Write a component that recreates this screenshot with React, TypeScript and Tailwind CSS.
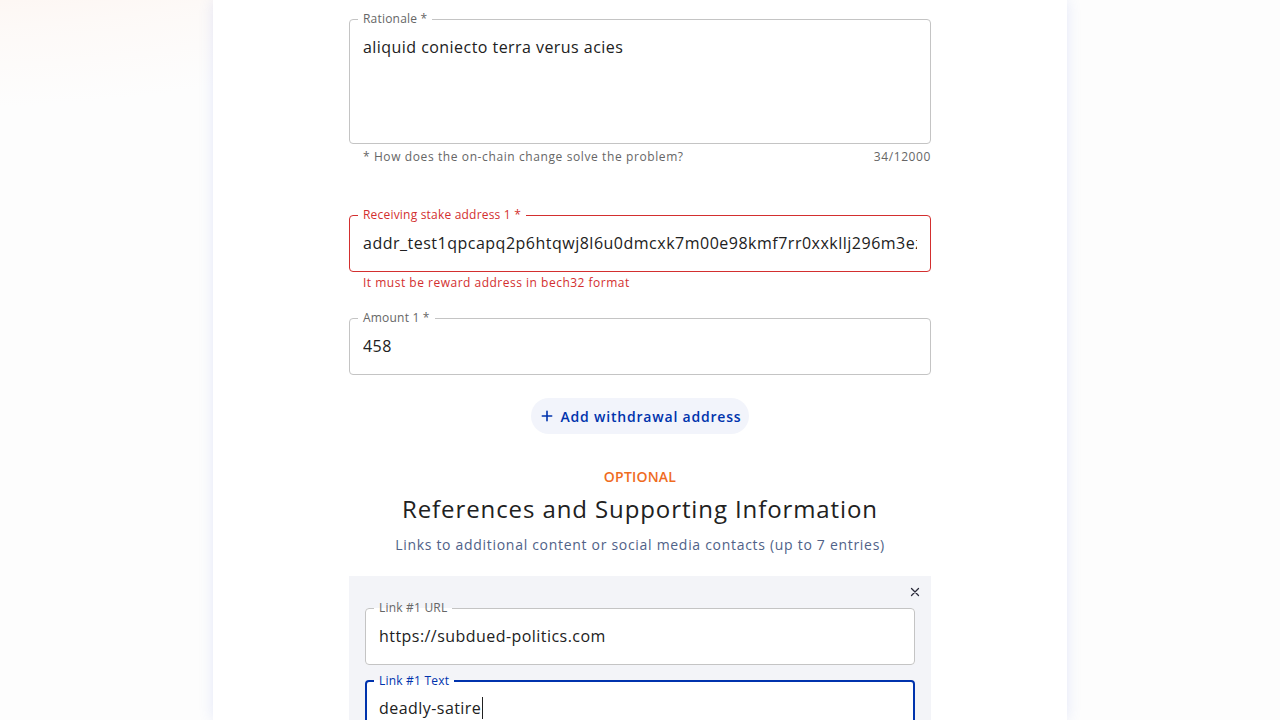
import React from "react";

const F = { fontFamily: '"Open Sans", "Liberation Sans", sans-serif' };

function Field({
  label,
  value,
  tone = "normal",
  multiline = false,
  caret = false,
  wide = false,
}: {
  label: string;
  value: string;
  tone?: "normal" | "error" | "focus";
  multiline?: boolean;
  caret?: boolean;
  wide?: boolean;
}) {
  const border =
    tone === "error"
      ? "border border-[#d32f2f]"
      : tone === "focus"
      ? "border-2 border-[#0033ad]"
      : "border border-[#c4c4c4]";
  const labelColor =
    tone === "error" ? "text-[#d32f2f]" : tone === "focus" ? "text-[#0033ad]" : "text-[#666666]";
  return (
    <fieldset className={`${border} rounded-[4px] bg-white min-w-0`}>
      <legend
        className={`${tone === "focus" ? "ml-[7px]" : "ml-[8px]"} px-[5px] text-[12px] leading-[12px] tracking-[0.2px] ${labelColor}`}
      >
        {label}
      </legend>
      <div
        className={`${tone === "focus" ? "px-[12px]" : "px-[13px]"} text-[16px] text-[#212121] ${
          wide ? "tracking-[0.5px]" : "tracking-[0.45px]"
        } ${
          multiline
            ? "h-[118px] pt-[11px] leading-[23px]"
            : tone === "focus"
            ? "h-[48px] pb-[6px] flex items-center"
            : "h-[50px] pb-[6px] flex items-center"
        }`}
      >
        <div className="flex-1 min-w-0 overflow-hidden whitespace-nowrap flex items-center">
          <span>{value}</span>
          {caret && <span className="inline-block w-px h-[22px] bg-[#212121] ml-[1px]" />}
        </div>
      </div>
    </fieldset>
  );
}

export default function App() {
  return (
    <div className="relative w-full h-[720px] overflow-hidden bg-[#fdfdfd]" style={F}>
      <div className="absolute inset-0 bg-[radial-gradient(ellipse_1000px_420px_at_-60px_-220px,rgba(255,195,165,0.4),rgba(255,235,225,0.2)_60%,rgba(255,255,255,0)_78%)]" />
      <div className="relative flex justify-center h-full">
        <div className="w-[854px] h-full bg-white shadow-[0_0_14px_rgba(70,100,220,0.14)] flex justify-center">
          <div className="w-[582px] pt-[13px] flex flex-col">
            <Field label="Rationale *" value="aliquid coniecto terra verus acies" multiline />
            <div className="flex justify-between mt-[4px] h-[20px] items-center text-[12px] text-[#666666] tracking-[0.6px]">
              <span className="ml-[14px]">* How does the on-chain change solve the problem?</span>
              <span>34/12000</span>
            </div>

            <div className="mt-[43px]">
              <Field
                label="Receiving stake address 1 *"
                value="addr_test1qpcapq2p6htqwj8l6u0dmcxk7m00e98kmf7rr0xxkllj296m3ezqgtmk6z9u6l5d2p3yvzk9qvl2fl7km2r4g6v8k5jxysq9y9s"
                tone="error"
                wide
              />
            </div>
            <div className="mt-[2px] h-[20px] flex items-center ml-[14px] text-[12px] text-[#d32f2f] tracking-[0.5px]">
              It must be reward address in bech32 format
            </div>

            <div className="mt-[20px]">
              <Field label="Amount 1 *" value="458" />
            </div>

            <div className="mt-[23px] flex justify-center">
              <button className="h-[36px] pl-[8px] pr-[8px] rounded-full bg-[#f2f4fb] flex items-center gap-[6px] text-[#0033ad] text-[14px] font-semibold tracking-[0.8px]">
                <svg width="16" height="16" viewBox="0 0 24 24" fill="none" stroke="#0033ad" strokeWidth="2.4" strokeLinecap="round">
                  <path d="M12 5v14M5 12h14" />
                </svg>
                Add withdrawal address
              </button>
            </div>

            <div className="mt-[32px] h-[20px] flex items-center justify-center text-[14px] font-semibold text-[#ef6c1f] tracking-[0.2px]">
              OPTIONAL
            </div>
            <div className="mt-[7px] h-[32px] flex items-center justify-center text-[24px] text-[#212121] tracking-[0.9px]">
              References and Supporting Information
            </div>
            <div className="mt-[9px] h-[20px] flex items-center justify-center text-[14px] font-medium text-[#506288] tracking-[0.7px]">
              Links to additional content or social media contacts (up to 7 entries)
            </div>

            <div className="mt-[22px] bg-[#f3f4f8] px-[16px] pt-[10px] pb-[16px]">
              <div className="flex justify-end h-[12px] items-center -mr-[6px]">
                <svg width="12" height="12" viewBox="0 0 24 24" fill="none" stroke="#2a2a3a" strokeWidth="2.6" strokeLinecap="round">
                  <path d="M5 5l14 14M19 5L5 19" />
                </svg>
              </div>
              <div className="mt-[4px]">
                <Field label="Link #1 URL" value="https://subdued-politics.com" />
              </div>
              <div className="mt-[10px]">
                <Field label="Link #1 Text" value="deadly-satire" tone="focus" caret />
              </div>
            </div>
          </div>
        </div>
      </div>
    </div>
  );
}
